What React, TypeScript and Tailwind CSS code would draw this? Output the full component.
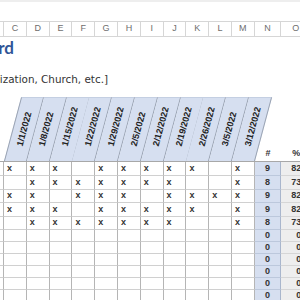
import React from "react";

const DATES = [
  "1/1/2022",
  "1/8/2022",
  "1/15/2022",
  "1/22/2022",
  "1/29/2022",
  "2/5/2022",
  "2/12/2022",
  "2/19/2022",
  "2/26/2022",
  "3/5/2022",
  "3/12/2022",
];
const LETTERS = ["C", "D", "E", "F", "G", "H", "I", "J", "K", "L", "M"];
const ROWS = [
  "xxx.xxxxx.x",
  ".xxxxxxx..x",
  "xx.xxx.xxxx",
  "xxx.xxxxx.x",
  ".xxxxxxx..x",
];
const HEIGHTS = [
  "h-[14px]",
  "h-[13.5px]",
  "h-[13.5px]",
  "h-[13.5px]",
  "h-[13.5px]",
  "h-[12px]",
  "h-[12px]",
  "h-[12px]",
  "h-[12px]",
  "h-[12px]",
  "h-[12px]",
];

export default function App() {
  return (
    <div className="w-[300px] h-[300px] overflow-hidden bg-white font-['Liberation_Sans',Arial,sans-serif]">
      <div className="w-[340px]">
        {/* top strip */}
        <div className="h-[21px] border-t-2 border-[#eeeeee]" />

        {/* column letters */}
        <div className="flex h-[16px] border-y border-[#d6d6d6] text-[9px] text-[#6e6e6e]">
          <div className="w-[4px] shrink-0 border-r border-[#d6d6d6]" />
          {LETTERS.map((l) => (
            <div
              key={l}
              className="w-[22.8px] shrink-0 border-r border-[#d6d6d6] flex items-center justify-center"
            >
              {l}
            </div>
          ))}
          <div className="w-[26.5px] shrink-0 border-r border-[#d6d6d6] flex items-center justify-center">
            N
          </div>
          <div className="w-[30px] shrink-0 border-r border-[#d6d6d6] flex items-center justify-center">
            O
          </div>
          <div className="w-[30px] shrink-0 flex items-center justify-center">P</div>
        </div>

        {/* title area */}
        <div className="h-[60px] pt-[1px]">
          <div className="w-[14px] flex justify-end whitespace-nowrap font-['Lato',sans-serif] font-bold text-[17px] leading-[20px] text-[#2f5597]">
            Attendance Record
          </div>
          <div className="mt-[15px] w-[108px] flex justify-end whitespace-nowrap font-['DejaVu_Sans',sans-serif] text-[10.4px] leading-[12px] text-[#333333]">
            [Name of Organization, Church, etc.]
          </div>
        </div>

        {/* slanted date header */}
        <div className="flex h-[65px] border-b border-[#a8a8a8]">
          <div className="w-[4px] shrink-0" />
          {DATES.map((d, i) => (
            <div key={d} className="relative w-[22.8px] shrink-0">
              <div
                className={
                  i === 0
                    ? "absolute inset-0 origin-bottom -skew-x-[15deg] bg-[#d6dff0] border-r border-l border-t border-[#9aa3b2] border-t-[#c4cfe2]"
                    : "absolute inset-0 origin-bottom -skew-x-[15deg] bg-[#d6dff0] border-r border-t border-[#9aa3b2] border-t-[#c4cfe2]"
                }
              />
              <span className="absolute left-[15.7px] top-[49px] origin-left [transform:translateY(-50%)_rotate(-75deg)] whitespace-nowrap text-[9px] font-bold leading-none text-[#222222]">
                {d}
              </span>
            </div>
          ))}
          <div className="w-[26.5px] shrink-0 flex items-end justify-center pb-[1px] text-[9px] font-bold text-[#333333]">
            #
          </div>
          <div className="w-[30px] shrink-0 flex items-end justify-center pb-[1px] text-[9px] font-bold text-[#333333]">
            %
          </div>
        </div>

        {/* data rows */}
        {HEIGHTS.map((h, r) => {
          const pattern = ROWS[r] ?? "...........";
          const count = pattern.split("").filter((c) => c === "x").length;
          const pct = count === 0 ? "0%" : `${Math.round((count / 11) * 100)}%`;
          return (
            <div key={r} className={`flex ${h}`}>
              <div className="w-[4px] shrink-0 border-r border-b border-r-[#b5b5b5] border-b-[#d0d0d0]" />
              {pattern.split("").map((c, i) => (
                <div
                  key={i}
                  className="w-[22.8px] shrink-0 border-r border-b border-r-[#b5b5b5] border-b-[#d0d0d0] flex items-center pl-[3px] text-[9px] font-bold text-[#333333] leading-none"
                >
                  {c === "x" ? "x" : ""}
                </div>
              ))}
              <div className="w-[26.5px] shrink-0 bg-[#d6dff0] border-r border-b border-r-[#a9b6cc] border-b-[#bcc8dc] flex items-center justify-center text-[9px] font-bold text-[#333333] leading-none">
                {count}
              </div>
              <div className="w-[30px] shrink-0 bg-[#eeeeee] border-b border-b-[#d6d6d6] flex items-center justify-end pr-[2px] text-[9px] font-bold text-[#333333] leading-none">
                {pct}
              </div>
            </div>
          );
        })}
      </div>
    </div>
  );
}
